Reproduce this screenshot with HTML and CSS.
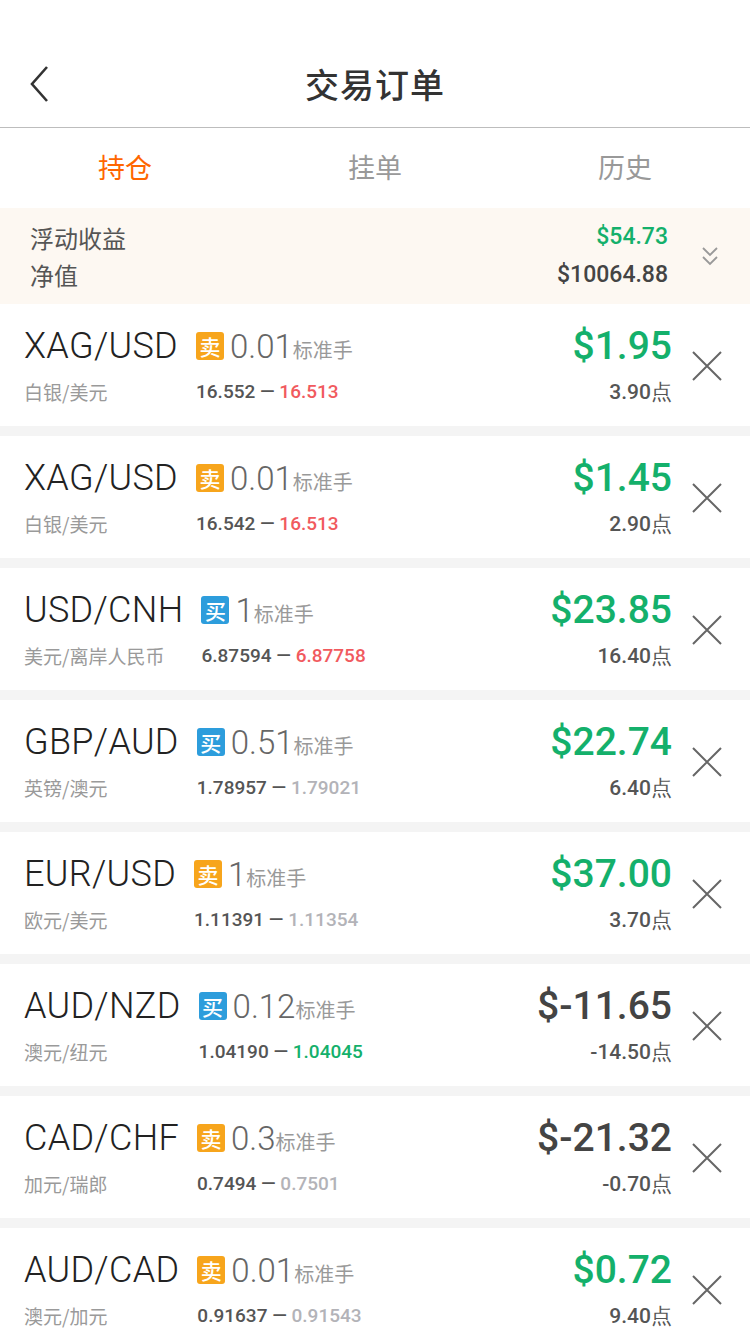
FILE: index.html
```html
<!DOCTYPE html>
<html lang="zh">
<head>
<meta charset="utf-8">
<link rel="stylesheet" href="styles.css">
</head>
<body>
<div class="statusbar"></div>
<header class="navbar">
  <span class="back"><svg width="24" height="38" viewBox="0 0 24 38"><path d="M19 2 L4 19 L19 36" fill="none" stroke="#333" stroke-width="2.6"/></svg></span>
  <h1 class="title">交易订单</h1>
</header>
<nav class="tabs">
  <div class="tab active">持仓</div>
  <div class="tab">挂单</div>
  <div class="tab">历史</div>
</nav>
<section class="summary">
  <div class="sum-labels">
    <div>浮动收益</div>
    <div>净值</div>
  </div>
  <div class="sum-values">
    <div class="num green">$54.73</div>
    <div class="num dark">$10064.88</div>
  </div>
  <span class="chev"><svg width="20" height="22" viewBox="0 0 20 22"><path d="M3 3 L10 10 L17 3 M3 12 L10 19 L17 12" fill="none" stroke="#999" stroke-width="1.8"/></svg></span>
</section>
<main class="list">
  <div class="order">
    <div class="info">
      <div class="pair">XAG/USD</div>
      <div class="lot"><span class="badge sell">卖</span><span class="qty">0.01</span><span class="unit">标准手</span></div>
      <div class="cn">白银/美元</div>
      <div class="quote">16.552 — <span class="red">16.513</span></div>
    </div>
    <div class="pl"><div class="amt green">$1.95</div><div class="pts">3.90点</div></div>
    <span class="close"><svg width="30" height="30" viewBox="0 0 30 30"><path d="M1 1 L29 29 M29 1 L1 29" stroke="#666" stroke-width="2"/></svg></span>
  </div>
  <div class="order">
    <div class="info">
      <div class="pair">XAG/USD</div>
      <div class="lot"><span class="badge sell">卖</span><span class="qty">0.01</span><span class="unit">标准手</span></div>
      <div class="cn">白银/美元</div>
      <div class="quote">16.542 — <span class="red">16.513</span></div>
    </div>
    <div class="pl"><div class="amt green">$1.45</div><div class="pts">2.90点</div></div>
    <span class="close"><svg width="30" height="30" viewBox="0 0 30 30"><path d="M1 1 L29 29 M29 1 L1 29" stroke="#666" stroke-width="2"/></svg></span>
  </div>
  <div class="order">
    <div class="info">
      <div class="pair">USD/CNH</div>
      <div class="lot"><span class="badge buy">买</span><span class="qty">1</span><span class="unit">标准手</span></div>
      <div class="cn">美元/离岸人民币</div>
      <div class="quote">6.87594 — <span class="red">6.87758</span></div>
    </div>
    <div class="pl"><div class="amt green">$23.85</div><div class="pts">16.40点</div></div>
    <span class="close"><svg width="30" height="30" viewBox="0 0 30 30"><path d="M1 1 L29 29 M29 1 L1 29" stroke="#666" stroke-width="2"/></svg></span>
  </div>
  <div class="order">
    <div class="info">
      <div class="pair">GBP/AUD</div>
      <div class="lot"><span class="badge buy">买</span><span class="qty">0.51</span><span class="unit">标准手</span></div>
      <div class="cn">英镑/澳元</div>
      <div class="quote">1.78957 — <span class="grey">1.79021</span></div>
    </div>
    <div class="pl"><div class="amt green">$22.74</div><div class="pts">6.40点</div></div>
    <span class="close"><svg width="30" height="30" viewBox="0 0 30 30"><path d="M1 1 L29 29 M29 1 L1 29" stroke="#666" stroke-width="2"/></svg></span>
  </div>
  <div class="order">
    <div class="info">
      <div class="pair">EUR/USD</div>
      <div class="lot"><span class="badge sell">卖</span><span class="qty">1</span><span class="unit">标准手</span></div>
      <div class="cn">欧元/美元</div>
      <div class="quote">1.11391 — <span class="grey">1.11354</span></div>
    </div>
    <div class="pl"><div class="amt green">$37.00</div><div class="pts">3.70点</div></div>
    <span class="close"><svg width="30" height="30" viewBox="0 0 30 30"><path d="M1 1 L29 29 M29 1 L1 29" stroke="#666" stroke-width="2"/></svg></span>
  </div>
  <div class="order">
    <div class="info">
      <div class="pair">AUD/NZD</div>
      <div class="lot"><span class="badge buy">买</span><span class="qty">0.12</span><span class="unit">标准手</span></div>
      <div class="cn">澳元/纽元</div>
      <div class="quote">1.04190 — <span class="green">1.04045</span></div>
    </div>
    <div class="pl"><div class="amt dark">$-11.65</div><div class="pts">-14.50点</div></div>
    <span class="close"><svg width="30" height="30" viewBox="0 0 30 30"><path d="M1 1 L29 29 M29 1 L1 29" stroke="#666" stroke-width="2"/></svg></span>
  </div>
  <div class="order">
    <div class="info">
      <div class="pair">CAD/CHF</div>
      <div class="lot"><span class="badge sell">卖</span><span class="qty">0.3</span><span class="unit">标准手</span></div>
      <div class="cn">加元/瑞郎</div>
      <div class="quote">0.7494 — <span class="grey">0.7501</span></div>
    </div>
    <div class="pl"><div class="amt dark">$-21.32</div><div class="pts">-0.70点</div></div>
    <span class="close"><svg width="30" height="30" viewBox="0 0 30 30"><path d="M1 1 L29 29 M29 1 L1 29" stroke="#666" stroke-width="2"/></svg></span>
  </div>
  <div class="order">
    <div class="info">
      <div class="pair">AUD/CAD</div>
      <div class="lot"><span class="badge sell">卖</span><span class="qty">0.01</span><span class="unit">标准手</span></div>
      <div class="cn">澳元/加元</div>
      <div class="quote">0.91637 — <span class="grey">0.91543</span></div>
    </div>
    <div class="pl"><div class="amt green">$0.72</div><div class="pts">9.40点</div></div>
    <span class="close"><svg width="30" height="30" viewBox="0 0 30 30"><path d="M1 1 L29 29 M29 1 L1 29" stroke="#666" stroke-width="2"/></svg></span>
  </div>
</main>
</body>
</html>
```
FILE: styles.css
```css
* { box-sizing: border-box; }
html, body { margin: 0; padding: 0; }
body {
  width: 750px;
  height: 1334px;
  overflow: hidden;
  background: #f4f4f4;
  font-family: "Noto Sans CJK SC", "Noto Sans", sans-serif;
  color: #333;
}
.statusbar { height: 40px; background: #fff; }
.navbar {
  height: 88px;
  background: #fff;
  border-bottom: 1px solid #bdbdbd;
  display: flex;
  align-items: center;
  justify-content: center;
  position: relative;
}
.back { position: absolute; left: 28px; top: 25px; display: block; height: 38px; }
.title { margin: 0; font-size: 34px; font-weight: 500; color: #333; letter-spacing: 1px; }
.tabs { display: flex; height: 80px; background: #fff; }
.tab {
  flex: 1;
  display: flex;
  align-items: center;
  justify-content: center;
  font-size: 27px;
  color: #999;
  padding-bottom: 4px;
}
.tab.active { color: #ff6600; }
.summary {
  height: 96px;
  background: #fdf8f2;
  display: flex;
  align-items: center;
  padding: 0 30px;
}
.sum-labels { flex: 1; font-size: 24px; color: #555; line-height: 37px; }
.sum-values { text-align: right; line-height: 38px; }
.num { font-family: Roboto, sans-serif; font-size: 23px; font-weight: 500; }
.chev { margin-left: 32px; display: block; height: 22px; }
.green { color: #14b06b; }
.dark { color: #444; }
.red { color: #f15a5e; }
.grey { color: #b3b3b8; }
.list { display: flex; flex-direction: column; gap: 10px; }
.order {
  background: #fff;
  height: 122px;
  display: flex;
  align-items: center;
  padding: 2px 28px 0 24px;
}
.info {
  display: grid;
  grid-template-columns: auto auto;
  column-gap: 18px;
  row-gap: 12px;
  align-items: center;
}
.pair { font-family: Roboto, sans-serif; font-weight: 300; font-size: 36px; color: #222; line-height: 40px; letter-spacing: 0.3px; }
.lot { display: flex; align-items: center; height: 40px; }
.badge {
  width: 28px; height: 28px;
  border-radius: 3px;
  color: #fff;
  font-size: 21px;
  font-weight: 500;
  line-height: 28px;
  text-align: center;
  margin-right: 6px;
}
.badge.sell { background: #f7a51c; }
.badge.buy { background: #2d9ddc; }
.qty { font-family: Roboto, sans-serif; font-weight: 300; font-size: 33px; color: #666; }
.unit { font-size: 20px; color: #999; margin-top: 6px; }
.cn { font-size: 19px; color: #9a9a9a; line-height: 28px; }
.quote { font-family: Roboto, sans-serif; font-size: 19px; font-weight: 500; color: #555; line-height: 28px; }
.pl { flex: 1; text-align: right; }
.amt { font-family: Roboto, sans-serif; font-size: 39px; font-weight: 500; line-height: 40px; }
.amt.dark { color: #444; }
.pts { font-family: Roboto, sans-serif; font-size: 21px; font-weight: 500; color: #555; line-height: 28px; margin-top: 12px; }
.close { display: block; margin-left: 20px; width: 30px; height: 30px; }
```
